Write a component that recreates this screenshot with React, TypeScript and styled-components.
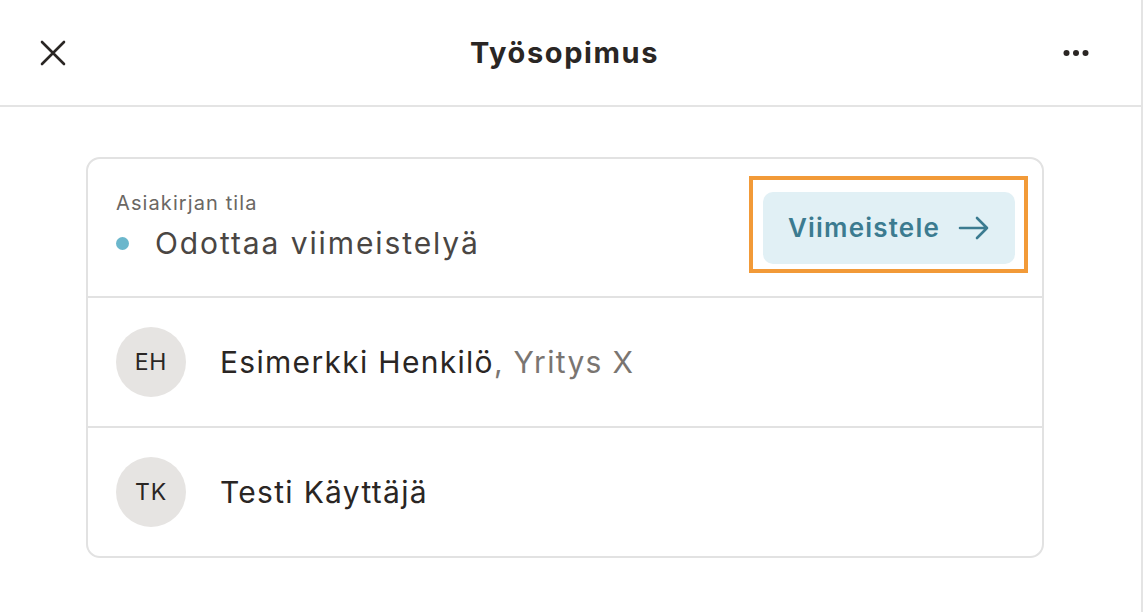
import React from 'react'
import styled, { createGlobalStyle } from 'styled-components'

const GlobalStyle = createGlobalStyle`
  html, body {
    margin: 0;
    padding: 0;
    background: #ffffff;
  }
  body {
    font-family: Inter, 'Noto Sans', sans-serif;
    color: #2a2624;
  }
`

const Panel = styled.div`
  width: 1141px;
  height: 612px;
  border-right: 2px solid #e4e4e4;
  display: flex;
  flex-direction: column;
`

const Header = styled.header`
  height: 105px;
  border-bottom: 2px solid #e4e4e4;
  display: flex;
  align-items: center;
  justify-content: space-between;
  padding: 0 52px 0 40px;
`

const IconButton = styled.button`
  border: none;
  background: none;
  padding: 0;
  display: flex;
  align-items: center;
  justify-content: center;
  color: #2a2624;
  cursor: pointer;
`

const Title = styled.h1`
  margin: 0;
  font-size: 29px;
  font-weight: 700;
  letter-spacing: 1.6px;
  color: #2a2624;
`

const Content = styled.main`
  padding: 50px 0 0 86px;
`

const Card = styled.section`
  width: 958px;
  border: 2px solid #e2e2e2;
  border-radius: 14px;
  box-sizing: border-box;
`

const Row = styled.div<{ $height: number; $last?: boolean }>`
  height: ${(p) => p.$height}px;
  display: flex;
  align-items: center;
  padding: 0 27px 0 28px;
  border-bottom: ${(p) => (p.$last ? 'none' : '2px solid #e2e2e2')};
`

const Status = styled.div`
  flex: 1;
  display: flex;
  flex-direction: column;
  gap: 10px;
  margin-top: -3px;
`

const StatusLabel = styled.div`
  font-size: 20px;
  letter-spacing: 1.1px;
  color: #6b6763;
`

const StatusValue = styled.div`
  display: flex;
  align-items: center;
  gap: 26px;
  font-size: 30px;
  letter-spacing: 1.9px;
  color: #4a4643;
`

const Dot = styled.span`
  width: 13px;
  height: 13px;
  border-radius: 50%;
  background: #6bb7cc;
`

const Highlight = styled.div`
  position: relative;
  &::after {
    content: '';
    position: absolute;
    top: -16px;
    left: -14px;
    right: -13px;
    bottom: -9px;
    border: 4px solid #f29a38;
    pointer-events: none;
  }
`

const ActionButton = styled.button`
  width: 252px;
  height: 72px;
  border: none;
  border-radius: 10px;
  background: #e1f0f5;
  color: #3b7b90;
  font-family: inherit;
  font-size: 26px;
  font-weight: 600;
  letter-spacing: 1.2px;
  display: flex;
  align-items: center;
  justify-content: center;
  gap: 18px;
  cursor: pointer;
`

const Avatar = styled.div`
  width: 70px;
  height: 70px;
  border-radius: 50%;
  background: #e6e4e2;
  display: flex;
  align-items: center;
  justify-content: center;
  font-size: 23px;
  letter-spacing: 0.8px;
  color: #2a2624;
  flex-shrink: 0;
`

const Name = styled.div`
  margin-left: 34px;
  font-size: 30px;
  letter-spacing: 1.3px;
  color: #2a2624;
`

const Company = styled.span`
  color: #7a7571;
`

const people = [
  { initials: 'EH', name: 'Esimerkki Henkilö', company: 'Yritys X' },
  { initials: 'TK', name: 'Testi Käyttäjä' }
]

export default function App() {
  return (
    <>
      <GlobalStyle />
      <Panel>
        <Header>
          <IconButton aria-label="Sulje">
            <svg width="26" height="26" viewBox="0 0 26 26" fill="none">
              <path
                d="M2 2 L24 24 M24 2 L2 24"
                stroke="#2a2624"
                strokeWidth="2.6"
                strokeLinecap="round"
              />
            </svg>
          </IconButton>
          <Title>Työsopimus</Title>
          <IconButton aria-label="Lisää">
            <svg width="26" height="8" viewBox="0 0 26 8">
              <circle cx="3.5" cy="4" r="3" fill="#2a2624" />
              <circle cx="13" cy="4" r="3" fill="#2a2624" />
              <circle cx="22.5" cy="4" r="3" fill="#2a2624" />
            </svg>
          </IconButton>
        </Header>
        <Content>
          <Card>
            <Row $height={137}>
              <Status>
                <StatusLabel>Asiakirjan tila</StatusLabel>
                <StatusValue>
                  <Dot />
                  Odottaa viimeistelyä
                </StatusValue>
              </Status>
              <Highlight>
                <ActionButton>
                  Viimeistele
                  <svg width="32" height="24" viewBox="0 0 32 24" fill="none">
                    <path
                      d="M2 12 H29 M19 2 L29 12 L19 22"
                      stroke="#3b7b90"
                      strokeWidth="2.6"
                      strokeLinecap="round"
                      strokeLinejoin="round"
                    />
                  </svg>
                </ActionButton>
              </Highlight>
            </Row>
            {people.map((p, i) => (
              <Row key={p.initials} $height={128} $last={i === people.length - 1}>
                <Avatar>{p.initials}</Avatar>
                <Name>
                  {p.name}
                  {p.company && <Company>, {p.company}</Company>}
                </Name>
              </Row>
            ))}
          </Card>
        </Content>
      </Panel>
    </>
  )
}
